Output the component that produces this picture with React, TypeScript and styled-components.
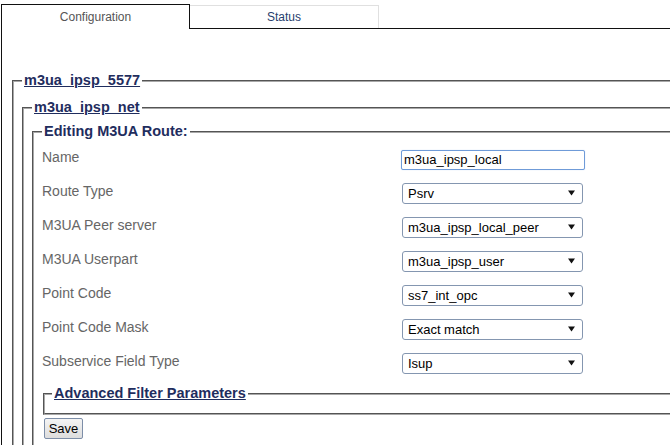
import React from "react";
import styled, { createGlobalStyle } from "styled-components";

const GlobalStyle = createGlobalStyle`
  html, body {
    margin: 0;
    padding: 0;
    background: #fff;
    overflow: hidden;
    font-family: "Liberation Sans", Arial, sans-serif;
  }
`;

const Page = styled.div`
  width: 740px;
  padding: 4px 0 0 1px;
`;

const TabBar = styled.div`
  display: flex;
  align-items: flex-end;
  height: 24px;
  border-bottom: 1px solid #111;
`;

const Tab = styled.div<{ $active?: boolean }>`
  box-sizing: border-box;
  width: 189px;
  height: ${(p) => (p.$active ? 25 : 23)}px;
  margin-bottom: ${(p) => (p.$active ? -1 : 0)}px;
  display: flex;
  align-items: center;
  justify-content: center;
  padding-bottom: ${(p) => (p.$active ? 1 : 0)}px;
  font-size: 12px;
  background: #fff;
  color: ${(p) => (p.$active ? "#555" : "#27406e")};
  border: 1px solid ${(p) => (p.$active ? "#111" : "#e0e0e0")};
  border-bottom: 0;
  border-left: ${(p) => (p.$active ? "1px solid #111" : "none")};
  cursor: pointer;
`;

const Panel = styled.div`
  border-left: 1px solid #111;
  padding: 43px 0 20px 10px;
  min-height: 400px;
`;

const Fieldset = styled.fieldset<{ $top?: number; $bottom?: number }>`
  margin: 0;
  padding: ${(p) => p.$top ?? 10}px 0 ${(p) => p.$bottom ?? 0}px 8px;
  border: 2px groove #a8a8a8;
  border-right: none;
  min-width: 0;
`;

const Legend = styled.legend<{ $link?: boolean }>`
  padding: 0 2px;
  font-size: 14.5px;
  font-weight: bold;
  line-height: 17px;
  color: #1f2d5e;
  text-decoration: ${(p) => (p.$link ? "underline" : "none")};
  cursor: ${(p) => (p.$link ? "pointer" : "default")};
`;

const FormGrid = styled.div`
  display: grid;
  grid-template-columns: 359px auto;
  grid-auto-rows: 34px;
  padding-top: 2px;
  align-items: center;
`;

const Label = styled.div`
  font-size: 14px;
  color: #666;
  padding-bottom: 5px;
`;

const TextInput = styled.input`
  box-sizing: border-box;
  width: 184px;
  height: 20px;
  margin-top: 1px;
  padding: 0 2px;
  font-family: "Liberation Sans", Arial, sans-serif;
  font-size: 13px;
  color: #000;
  border: 1px solid #6f9bd8;
  border-radius: 2px;
  outline: none;
  box-shadow: 0 0 1px #a9c6ef;
`;

const SelectWrap = styled.span`
  position: relative;
  display: inline-block;
  vertical-align: top;
  margin-left: 1px;
  width: 181px;
  height: 21px;
`;

const Select = styled.select`
  appearance: none;
  -webkit-appearance: none;
  box-sizing: border-box;
  width: 100%;
  height: 100%;
  padding: 0 20px 0 5px;
  font-family: "Liberation Sans", Arial, sans-serif;
  font-size: 13px;
  color: #000;
  background: #fff;
  border: 1px solid #8496b0;
  border-radius: 3px;
  outline: none;
`;

const Arrow = styled.svg`
  position: absolute;
  right: 8px;
  top: 7px;
  pointer-events: none;
`;

const Advanced = styled(Fieldset)`
  margin: 5px 0 0 1px;
  padding: 0 0 11px 7px;
`;

const SaveButton = styled.button`
  display: block;
  box-sizing: border-box;
  margin: 3px 0 0 2px;
  width: 39px;
  height: 21px;
  padding: 0;
  font-family: "Liberation Sans", Arial, sans-serif;
  font-size: 13px;
  color: #000;
  background: linear-gradient(#f4f4f4, #dddddd);
  border: 1px solid #7d8ea8;
  border-radius: 2px;
`;

interface SelectFieldProps {
  value: string;
}

const SelectField = ({ value }: SelectFieldProps) => (
  <SelectWrap>
    <Select defaultValue={value}>
      <option>{value}</option>
    </Select>
    <Arrow width="7" height="6" viewBox="0 0 7 6">
      <path d="M0 0.5h7L3.5 5.5z" fill="#111" />
    </Arrow>
  </SelectWrap>
);

const rows: { label: string; value: string }[] = [
  { label: "Route Type", value: "Psrv" },
  { label: "M3UA Peer server", value: "m3ua_ipsp_local_peer" },
  { label: "M3UA Userpart", value: "m3ua_ipsp_user" },
  { label: "Point Code", value: "ss7_int_opc" },
  { label: "Point Code Mask", value: "Exact match" },
  { label: "Subservice Field Type", value: "Isup" },
];

export default function App() {
  return (
    <>
      <GlobalStyle />
      <Page>
        <TabBar>
          <Tab $active>Configuration</Tab>
          <Tab>Status</Tab>
        </TabBar>
        <Panel>
          <Fieldset $top={10}>
            <Legend $link>m3ua_ipsp_5577</Legend>
            <Fieldset $top={7}>
              <Legend $link>m3ua_ipsp_net</Legend>
              <Fieldset $top={0} $bottom={10}>
                <Legend>Editing M3UA Route:</Legend>
                <FormGrid>
                  <Label>Name</Label>
                  <div>
                    <TextInput defaultValue="m3ua_ipsp_local" />
                  </div>
                  {rows.map((r) => (
                    <React.Fragment key={r.label}>
                      <Label>{r.label}</Label>
                      <div>
                        <SelectField value={r.value} />
                      </div>
                    </React.Fragment>
                  ))}
                </FormGrid>
                <Advanced>
                  <Legend $link>Advanced Filter Parameters</Legend>
                </Advanced>
                <SaveButton>Save</SaveButton>
              </Fieldset>
            </Fieldset>
          </Fieldset>
        </Panel>
      </Page>
    </>
  );
}
